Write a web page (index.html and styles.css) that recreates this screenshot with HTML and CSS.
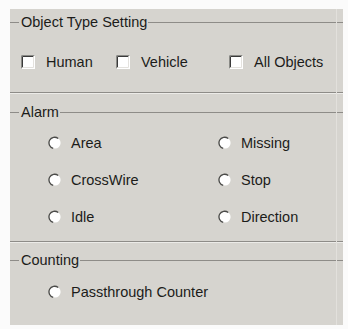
FILE: index.html
```html
<!DOCTYPE html>
<html>
<head>
<meta charset="utf-8">
<link rel="stylesheet" href="styles.css">
</head>
<body>
<div class="panel">
  <div class="section s1">
    <div class="legend"><span class="lead"></span><span class="title">Object Type Setting</span><span class="rest"></span></div>
    <div class="checks">
      <label class="opt"><svg class="cb" viewBox="0 0 14 14" width="14" height="14"><rect x="0" y="0" width="14" height="14" fill="#ffffff"/><path d="M0.5 13.5V0.5H13.5" fill="none" stroke="#8a8a86"/><path d="M1.5 12.5V1.5H12.5" fill="none" stroke="#3a3a3a"/><path d="M1.5 12.5H12.5V1.5" fill="none" stroke="#e4e2de"/></svg><span>Human</span></label>
      <label class="opt"><svg class="cb" viewBox="0 0 14 14" width="14" height="14"><rect x="0" y="0" width="14" height="14" fill="#ffffff"/><path d="M0.5 13.5V0.5H13.5" fill="none" stroke="#8a8a86"/><path d="M1.5 12.5V1.5H12.5" fill="none" stroke="#3a3a3a"/><path d="M1.5 12.5H12.5V1.5" fill="none" stroke="#e4e2de"/></svg><span>Vehicle</span></label>
      <label class="opt"><svg class="cb" viewBox="0 0 14 14" width="14" height="14"><rect x="0" y="0" width="14" height="14" fill="#ffffff"/><path d="M0.5 13.5V0.5H13.5" fill="none" stroke="#8a8a86"/><path d="M1.5 12.5V1.5H12.5" fill="none" stroke="#3a3a3a"/><path d="M1.5 12.5H12.5V1.5" fill="none" stroke="#e4e2de"/></svg><span>All Objects</span></label>
    </div>
  </div>
  <div class="section s2">
    <div class="legend"><span class="lead"></span><span class="title">Alarm</span><span class="rest"></span></div>
    <div class="radios">
      <label class="opt r"><svg class="rb" viewBox="0 0 14 14" width="14" height="14"><circle cx="7" cy="7" r="5.6" fill="#ffffff"/><path d="M10.2 2.6A5.6 5.6 0 1 0 5.2 12.3" fill="none" stroke="#4a4a48" stroke-width="1.3"/></svg><span>Area</span></label>
      <label class="opt r"><svg class="rb" viewBox="0 0 14 14" width="14" height="14"><circle cx="7" cy="7" r="5.6" fill="#ffffff"/><path d="M10.2 2.6A5.6 5.6 0 1 0 5.2 12.3" fill="none" stroke="#4a4a48" stroke-width="1.3"/></svg><span>Missing</span></label>
      <label class="opt r"><svg class="rb" viewBox="0 0 14 14" width="14" height="14"><circle cx="7" cy="7" r="5.6" fill="#ffffff"/><path d="M10.2 2.6A5.6 5.6 0 1 0 5.2 12.3" fill="none" stroke="#4a4a48" stroke-width="1.3"/></svg><span>CrossWire</span></label>
      <label class="opt r"><svg class="rb" viewBox="0 0 14 14" width="14" height="14"><circle cx="7" cy="7" r="5.6" fill="#ffffff"/><path d="M10.2 2.6A5.6 5.6 0 1 0 5.2 12.3" fill="none" stroke="#4a4a48" stroke-width="1.3"/></svg><span>Stop</span></label>
      <label class="opt r"><svg class="rb" viewBox="0 0 14 14" width="14" height="14"><circle cx="7" cy="7" r="5.6" fill="#ffffff"/><path d="M10.2 2.6A5.6 5.6 0 1 0 5.2 12.3" fill="none" stroke="#4a4a48" stroke-width="1.3"/></svg><span>Idle</span></label>
      <label class="opt r"><svg class="rb" viewBox="0 0 14 14" width="14" height="14"><circle cx="7" cy="7" r="5.6" fill="#ffffff"/><path d="M10.2 2.6A5.6 5.6 0 1 0 5.2 12.3" fill="none" stroke="#4a4a48" stroke-width="1.3"/></svg><span>Direction</span></label>
    </div>
  </div>
  <div class="section s3">
    <div class="legend"><span class="lead"></span><span class="title">Counting</span><span class="rest"></span></div>
    <div class="radios single">
      <label class="opt r"><svg class="rb" viewBox="0 0 14 14" width="14" height="14"><circle cx="7" cy="7" r="5.6" fill="#ffffff"/><path d="M10.2 2.6A5.6 5.6 0 1 0 5.2 12.3" fill="none" stroke="#4a4a48" stroke-width="1.3"/></svg><span>Passthrough Counter</span></label>
    </div>
  </div>
</div>
</body>
</html>
```
FILE: styles.css
```css
html, body {
  margin: 0;
  padding: 0;
  background: #fbfbfb;
}
body {
  font-family: "Liberation Sans", Arial, sans-serif;
  font-size: 14.5px;
  color: #1c1c1a;
}
.panel {
  position: relative;
  margin: 9px 0 0 10px;
  width: 333px;
  height: 316px;
  background: #d6d4cf;
  box-sizing: border-box;
}
.panel::after {
  content: "";
  position: absolute;
  top: 0;
  bottom: 0;
  right: 6px;
  width: 1px;
  background: #e2e0dc;
}
.section {
  box-sizing: border-box;
}
.s1 {
  height: 84px;
  border-bottom: 1px solid #8e8c88;
}
.s2 {
  height: 149px;
  padding-top: 8px;
  border-top: 1px solid #ecebe8;
  border-bottom: 1px solid #8e8c88;
}
.s3 {
  padding-top: 7px;
  border-top: 1px solid #ecebe8;
}
.s1 .legend {
  height: 26px;
}
.legend {
  display: flex;
  align-items: center;
  height: 20px;
}
.legend .lead {
  width: 9px;
  height: 1px;
  background: #8e8c88;
}
.legend .title {
  padding: 0 1px 0 2px;
  line-height: 20px;
}
.legend .rest {
  flex: 1;
  height: 1px;
  background: #8e8c88;
}
.checks {
  display: grid;
  grid-template-columns: 95px 113px auto;
  padding-left: 11px;
  margin-top: 17px;
  height: 20px;
}
.opt {
  display: flex;
  align-items: center;
  height: 20px;
}
.cb {
  flex: none;
  margin-right: 11px;
}
.radios {
  display: grid;
  grid-template-columns: 170px auto;
  row-gap: 17px;
  padding-left: 38px;
  margin-top: 11px;
}
.radios.single {
  margin-top: 12px;
}
.rb {
  flex: none;
  margin-right: 9px;
}
```
